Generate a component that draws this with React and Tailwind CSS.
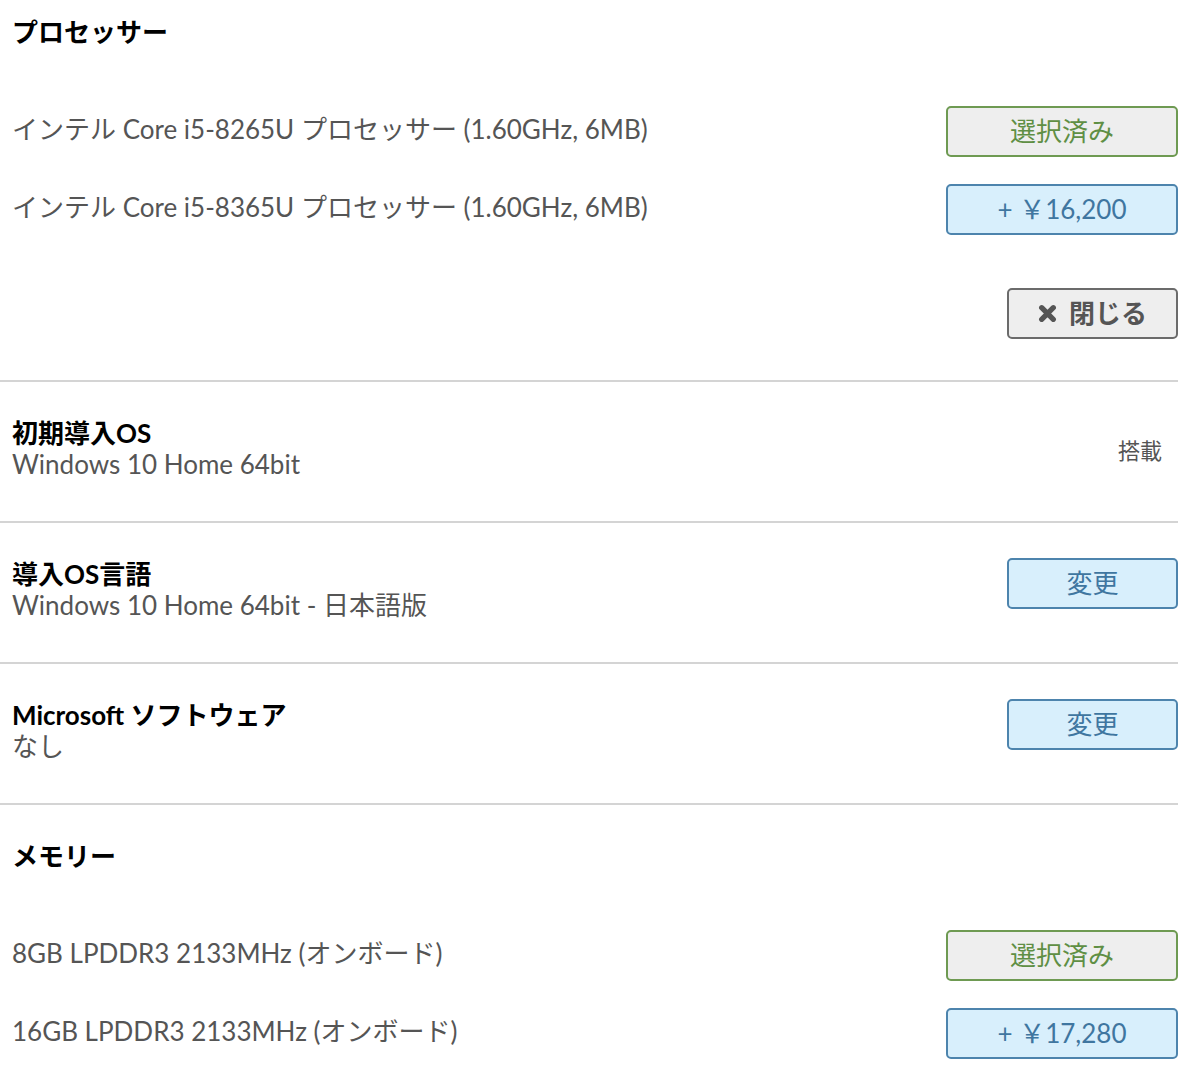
import { useState } from 'react'

const font = { fontFamily: 'Lato, "Noto Sans CJK JP", sans-serif' }

function PriceButton({ children }) {
  return (
    <button className="w-[232px] h-[51px] rounded-[5px] border-2 border-[#4d84ad] bg-[#d8effc] text-[26px] text-[#3f76a0]">
      {children}
    </button>
  )
}

function SelectedButton() {
  return (
    <button className="w-[232px] h-[51px] rounded-[5px] border-2 border-[#6e9a52] bg-[#eeeeee] text-[26px] text-[#5f8f44]">
      選択済み
    </button>
  )
}

function ChangeButton() {
  return (
    <button className="w-[171px] h-[51px] rounded-[5px] border-2 border-[#4d84ad] bg-[#d8effc] text-[26px] text-[#3f76a0]">
      変更
    </button>
  )
}

function Row({ label, children }) {
  return (
    <div className="flex items-center justify-between h-[51px]">
      <span className="pl-3 pb-1 text-[26px] text-[#555]">{label}</span>
      {children}
    </div>
  )
}

function InfoSection({ title, value, children }) {
  return (
    <div className="flex items-start justify-between h-[141px] pt-[35px] border-b-2 border-[#d4d4d4]">
      <div className="pl-3 flex flex-col">
        <span className="text-[26px] font-bold text-black leading-[32px]">{title}</span>
        <span className="text-[26px] text-[#555] leading-[31px]">{value}</span>
      </div>
      {children}
    </div>
  )
}

export default function App() {
  const [open] = useState(true)

  return (
    <div className="w-[1178px] bg-white min-h-screen" style={font}>
      {/* プロセッサー */}
      <div className="border-b-2 border-[#d4d4d4] pb-[41px]">
        <h2 className="pl-3 pt-[16px] text-[26px] font-bold text-black leading-[32px]">プロセッサー</h2>
        <div className="mt-[58px] flex flex-col gap-[27px]">
          <Row label="インテル Core i5-8265U プロセッサー (1.60GHz, 6MB)">
            <SelectedButton />
          </Row>
          <Row label="インテル Core i5-8365U プロセッサー (1.60GHz, 6MB)">
            <PriceButton>+ ￥16,200</PriceButton>
          </Row>
        </div>
        {open && (
          <div className="mt-[53px] flex justify-end">
            <button className="w-[171px] h-[51px] rounded-[5px] border-2 border-[#6b6b6b] bg-[#eeeeee] text-[26px] font-bold text-[#555] flex items-center justify-center gap-3">
              <svg width="19" height="19" viewBox="0 0 18 18">
                <path d="M3.5 3.5 L14.5 14.5 M14.5 3.5 L3.5 14.5" stroke="#555" strokeWidth="5" strokeLinecap="round" />
              </svg>
              閉じる
            </button>
          </div>
        )}
      </div>

      <InfoSection title="初期導入OS" value="Windows 10 Home 64bit">
        <span className="pr-4 mt-[17px] text-[22px] text-[#555]">搭載</span>
      </InfoSection>

      <InfoSection title="導入OS言語" value="Windows 10 Home 64bit - 日本語版">
        <ChangeButton />
      </InfoSection>

      <InfoSection title="Microsoft ソフトウェア" value="なし">
        <ChangeButton />
      </InfoSection>

      {/* メモリー */}
      <div>
        <h2 className="pl-3 pt-[35px] text-[26px] font-bold text-black leading-[32px]">メモリー</h2>
        <div className="mt-[58px] flex flex-col gap-[27px]">
          <Row label="8GB LPDDR3 2133MHz (オンボード)">
            <SelectedButton />
          </Row>
          <Row label="16GB LPDDR3 2133MHz (オンボード)">
            <PriceButton>+ ￥17,280</PriceButton>
          </Row>
        </div>
      </div>
    </div>
  )
}
